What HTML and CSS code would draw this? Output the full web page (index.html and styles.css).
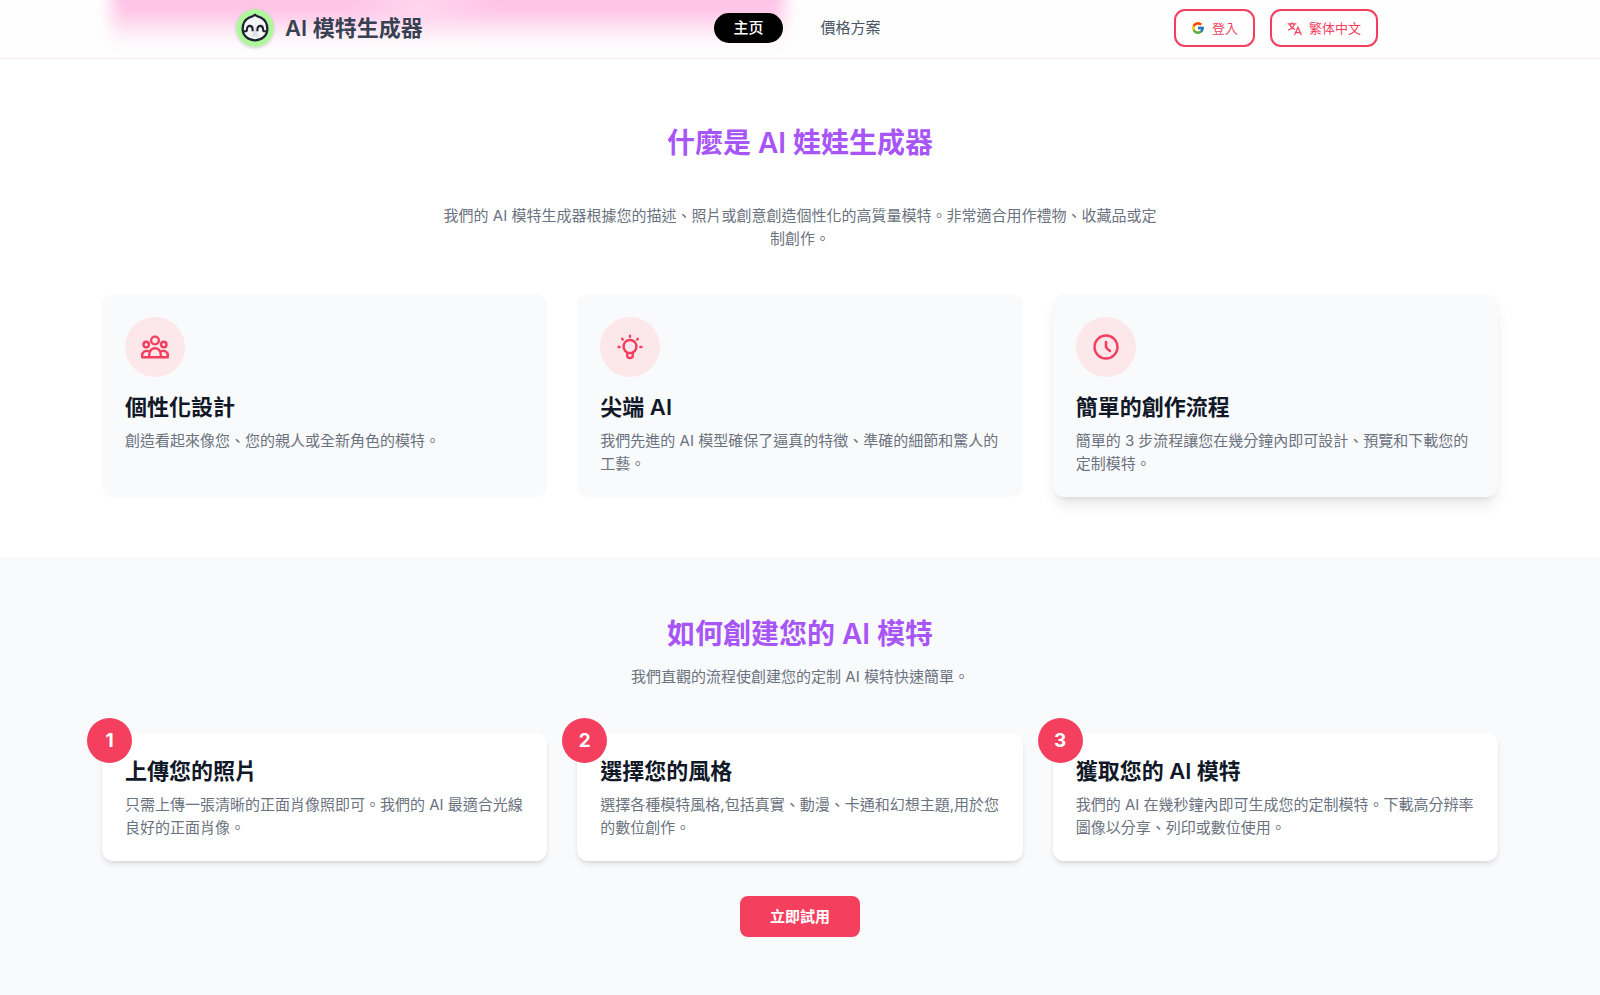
FILE: index.html
```html
<!DOCTYPE html>
<html lang="zh-Hant">
<head>
<meta charset="utf-8">
<meta name="viewport" content="width=device-width, initial-scale=1">
<title>AI 模特生成器</title>
<link rel="stylesheet" href="styles.css">
</head>
<body>
<header class="header">
  <div class="glow" aria-hidden="true"></div>
  <div class="header-inner">
    <a class="brand" href="#">
      <svg class="brand-logo" viewBox="-20 -20 40 40" aria-hidden="true">
        <circle r="20" fill="#aef79c"/>
        <path d="M0-14C2-12 4-12 6-11C11-8.500 13-4 13 1C13 8 7 13 0 13S-13 8-13 1C-13-4-11-8.500-6-11C-4-12-2-12 0-14Z" fill="#f4f5f7" stroke="#1f2530" stroke-width="2.400" stroke-linejoin="round"/>
        <path d="M-4 9Q0 4 0-7Q0 4 4 9Z" fill="#dfe1e5"/>
        <path d="M-13 3.500H-10Q-8.500 3.500-8.500 1.500C-8.500-3.500-2.500-3.500-2.500 1.500V3.500M2.500 3.500V1.500C2.500-3.500 8.500-3.500 8.500 1.500Q8.500 3.500 10 3.500H13" fill="none" stroke="#1f2530" stroke-width="2.200"/>
      </svg>
      <span>AI 模特生成器</span>
    </a>
    <nav class="nav">
      <a class="nav-link nav-link-active" href="#" lang="zh-Hans">主页</a>
      <a class="nav-link" href="#pricing">價格方案</a>
    </nav>
    <div class="actions">
      <button class="outline-btn" type="button">
        <svg class="google-icon" viewBox="0 0 48 48" aria-hidden="true">
          <path fill="#FFC107" d="M43.600 20H24v8h11.300C33.700 32.700 29.200 36 24 36c-6.600 0-12-5.400-12-12s5.400-12 12-12c3.100 0 5.800 1.200 7.900 3l5.700-5.600C34 6 29.300 4 24 4 13 4 4 13 4 24s9 20 20 20 20-9 20-20c0-1.300-.1-2.700-.4-4z"/>
          <path fill="#FF3D00" d="M6.300 14.700l6.600 4.800C14.700 15.100 19 12 24 12c3.100 0 5.800 1.200 7.900 3l5.700-5.600C34 6 29.300 4 24 4 16.300 4 9.700 8.300 6.300 14.700z"/>
          <path fill="#4CAF50" d="M24 44c5.200 0 9.900-2 13.400-5.200l-6.200-5.200C29.200 35.100 26.700 36 24 36c-5.200 0-9.600-3.300-11.300-8l-6.500 5C9.500 39.600 16.200 44 24 44z"/>
          <path fill="#1976D2" d="M43.600 20H24v8h11.300c-.8 2.200-2.200 4.200-4.100 5.600l6.200 5.200C37 39.200 44 34 44 24c0-1.300-.1-2.700-.4-4z"/>
        </svg>
        <span>登入</span>
      </button>
      <button class="outline-btn" type="button">
        <svg class="lang-icon" viewBox="0 0 24 24" aria-hidden="true">
          <path d="M1 4.500H15M8 2V4.500M12 4.500C11 8.500 7 12.500 2 14.500M4 4.500C5.500 8.500 8.500 12 12.500 13.500M12 22.500L17.500 10L23 22.500M14 18.500H21" fill="none" stroke="currentColor" stroke-width="2"/>
        </svg>
        <span lang="zh-Hans">繁体中文</span>
      </button>
    </div>
  </div>
</header>

<main>
  <section class="section about">
    <h2 class="heading">什麼是 AI 娃娃生成器</h2>
    <p class="lead lead-spaced">我們的 AI 模特生成器根據您的描述、照片或創意創造個性化的高質量模特。非常適合用作禮物、收藏品或定制創作。</p>
    <div class="grid">
      <article class="card feature">
        <div class="icon-disc">
          <svg class="icon" viewBox="-15 -15 30 30" aria-hidden="true">
            <circle cy="-6.500" r="3.900"/><circle cx="-8.800" cy="-2.500" r="2.700"/><circle cx="8.800" cy="-2.500" r="2.700"/>
            <path d="M-5.800 10.200V7.500C-5.800-.8 5.800-.8 5.800 7.500V10.200M-5.500 4.300C-10 3-12.800 4.800-12.800 8.500V10.200H12.800V8.500C12.800 4.800 10 3 5.500 4.300"/>
          </svg>
        </div>
        <h3 class="card-title">個性化設計</h3>
        <p class="card-text">創造看起來像您、您的親人或全新角色的模特。</p>
      </article>
      <article class="card feature">
        <div class="icon-disc">
          <svg class="icon" viewBox="-15 -15 30 30" aria-hidden="true">
            <path d="M-2.500 6V5.500A6.500 6.500 0 1 1 2.500 5.500V6M-2.800 6H2.800V8.500A2.800 2.600 0 0 1-2.800 8.500ZM0-11.300V-10.300M-7.800-8.200L-7.200-7.400M7.800-8.200L7.200-7.400M-11.400 0H-10.400M11.400 0H10.400"/>
          </svg>
        </div>
        <h3 class="card-title">尖端 AI</h3>
        <p class="card-text">我們先進的 AI 模型確保了逼真的特徵、準確的細節和驚人的工藝。</p>
      </article>
      <article class="card feature feature-raised">
        <div class="icon-disc">
          <svg class="icon" viewBox="-15 -15 30 30" aria-hidden="true">
            <circle r="11.500"/><path d="M0-5V0Q1 2 4 3.800" stroke-width="2.600"/>
          </svg>
        </div>
        <h3 class="card-title">簡單的創作流程</h3>
        <p class="card-text">簡單的 3 步流程讓您在幾分鐘內即可設計、預覽和下載您的定制模特。</p>
      </article>
    </div>
  </section>

  <section class="section steps">
    <h2 class="heading">如何創建您的 AI 模特</h2>
    <p class="lead">我們直觀的流程使創建您的定制 AI 模特快速簡單。</p>
    <div class="grid">
      <article class="card step">
        <span class="step-number">1</span>
        <h3 class="card-title">上傳您的照片</h3>
        <p class="card-text">只需上傳一張清晰的正面肖像照即可。我們的 AI 最適合光線良好的正面肖像。</p>
      </article>
      <article class="card step">
        <span class="step-number">2</span>
        <h3 class="card-title">選擇您的風格</h3>
        <p class="card-text">選擇各種模特風格,包括真實、動漫、卡通和幻想主題,用於您的數位創作。</p>
      </article>
      <article class="card step">
        <span class="step-number">3</span>
        <h3 class="card-title">獲取您的 AI 模特</h3>
        <p class="card-text">我們的 AI 在幾秒鐘內即可生成您的定制模特。下載高分辨率圖像以分享、列印或數位使用。</p>
      </article>
    </div>
    <button class="cta" type="button">立即試用</button>
  </section>
</main>
</body>
</html>
```
FILE: styles.css
```css
*, *::before, *::after { box-sizing: border-box; }

body {
  margin: 0;
  background: #fff;
  color: #111827;
  font-family: Inter, "Noto Sans CJK TC", sans-serif;
  font-size: 15px;
  line-height: 23px;
}

:lang(zh-Hans) { font-family: Inter, "Noto Sans CJK SC", sans-serif; }

h2, h3, p { margin: 0; }
button { font: inherit; cursor: pointer; }
a { color: inherit; text-decoration: none; }

/* Header */
.header {
  position: sticky;
  top: 0;
  z-index: 10;
  overflow: hidden;
  background: #fefefe;
  border-bottom: 1px solid #ffe8ee;
}

.glow {
  position: absolute;
  top: -60px;
  left: 7%;
  width: 42%;
  height: 106px;
  background:
    radial-gradient(ellipse 80px 30px at 46% 62px, rgba(255, 222, 241, .8), transparent),
    linear-gradient(#ffc2e5 68%, rgba(255, 194, 229, .35) 84%, rgba(255, 194, 229, 0));
  filter: blur(8px);
}

.header-inner {
  position: relative;
  display: grid;
  grid-template-columns: 1fr auto 1fr;
  align-items: center;
  max-width: 1200px;
  margin: 0 auto;
  padding: 9px 22px 11px 36px;
}

.brand {
  display: flex;
  align-items: center;
  gap: 11px;
  color: #374151;
  font-size: 22px;
  font-weight: 600;
  line-height: 30px;
}

.brand-logo {
  width: 38px;
  height: 38px;
  border-radius: 50%;
  box-shadow: 0 1px 3px rgba(0, 0, 0, .2);
}

.nav { display: flex; gap: 19px; }

.nav-link {
  padding: 3px 19px 4px;
  border-radius: 15px;
  color: #4b5563;
}

.nav-link-active {
  background: #000;
  color: #fff;
  font-weight: 500;
}

.actions { display: flex; justify-content: flex-end; gap: 15px; }

.outline-btn {
  display: flex;
  align-items: center;
  gap: 7px;
  height: 38px;
  padding: 0 15px;
  border: 2px solid #f43f5e;
  border-radius: 11px;
  background: transparent;
  color: #f43f5e;
  font-size: 13px;
}

.google-icon { width: 14px; height: 14px; }
.lang-icon { width: 15px; height: 15px; }

/* Sections */
.section {
  display: flex;
  flex-direction: column;
  align-items: center;
  padding: 60px 24px;
}

.about { padding-top: 67px; }
.steps { background: #f9fafb; }

.heading {
  color: #a855f7;
  font-size: 28px;
  font-weight: 600;
  line-height: 34px;
}

.lead {
  max-width: 720px;
  margin: 14px 0 45px;
  color: #6b7280;
  text-align: center;
}

.lead-spaced { margin: 44px 0; }

.grid {
  display: grid;
  grid-template-columns: repeat(3, 1fr);
  gap: 30px;
  width: 100%;
  max-width: 1396px;
}

.card {
  padding: 23px 23px 22px;
  border-radius: 11px;
}

.card-title {
  margin-bottom: 7px;
  font-size: 22px;
  font-weight: 600;
  line-height: 30px;
}

.card-text { color: #6b7280; }

.feature { background: #f9fafb; }

.feature-raised {
  box-shadow: 0 10px 15px -3px rgba(0, 0, 0, .1), 0 4px 6px -4px rgba(0, 0, 0, .1);
}

.icon-disc {
  display: grid;
  place-items: center;
  width: 60px;
  height: 60px;
  margin-bottom: 15px;
  border-radius: 50%;
  background: #fce8eb;
}

.icon {
  width: 30px;
  height: 30px;
  fill: none;
  stroke: #f43f5e;
  stroke-width: 2.4;
  stroke-linecap: round;
  stroke-linejoin: round;
}

.step {
  position: relative;
  background: #fff;
  box-shadow: 0 4px 6px -1px rgba(0, 0, 0, .1), 0 2px 4px -2px rgba(0, 0, 0, .1);
}

.step-number {
  position: absolute;
  top: -15px;
  left: -15px;
  display: grid;
  place-items: center;
  width: 45px;
  height: 45px;
  border-radius: 50%;
  background: #f43f5e;
  color: #fff;
  font-size: 19px;
  font-weight: 700;
}

.cta {
  margin-top: 35px;
  padding: 9px 30px;
  border: 0;
  border-radius: 8px;
  background: #f43f5e;
  color: #fff;
  font-weight: 600;
}

.steps { min-height: calc(100vh - 557px); }
```
